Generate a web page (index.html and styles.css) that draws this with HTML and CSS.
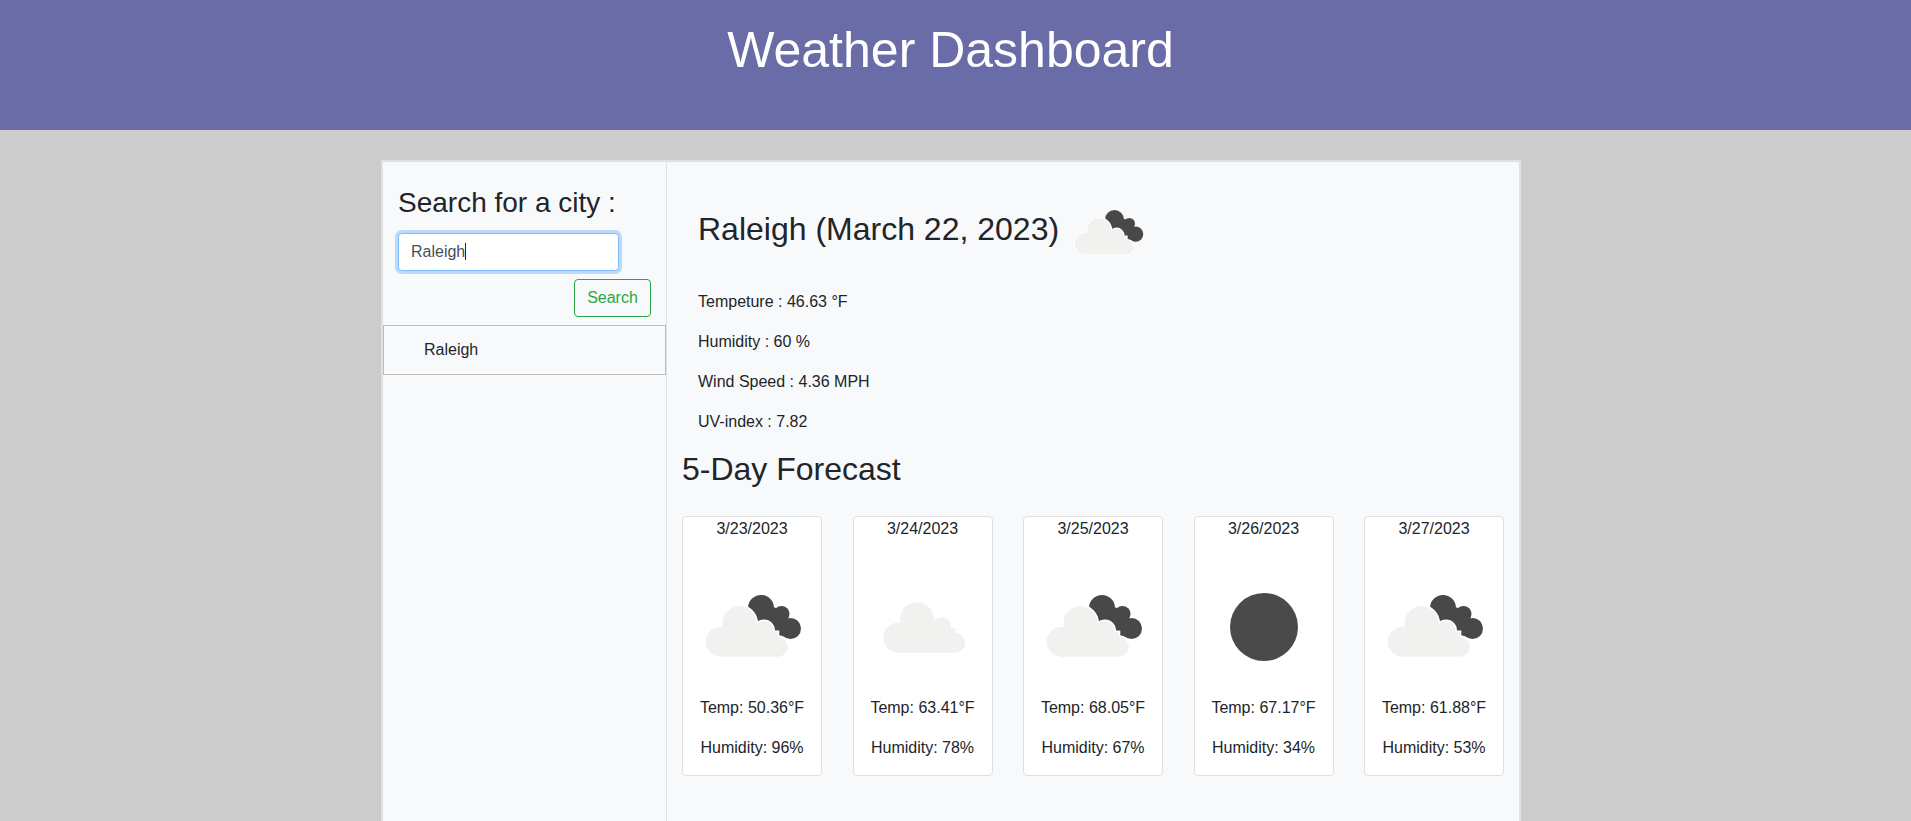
FILE: index.html
```html
<!DOCTYPE html>
<html lang="en">
<head>
	<meta charset="UTF-8">
	<meta name="viewport" content="width=device-width, initial-scale=1.0">
	<title>Weather Dashboard</title>
	<link rel="stylesheet" href="styles.css">
</head>
<body>
	<svg class="icon-defs">
		<symbol id="light-cloud" viewBox="0 0 100 100">
			<circle cx="18.8" cy="64.7" r="15"/>
			<circle cx="37.5" cy="46.3" r="17"/>
			<circle cx="62" cy="53.5" r="9.5"/>
			<circle cx="75.8" cy="69.7" r="10"/>
			<rect x="18.8" y="55" width="57" height="24.7"/>
		</symbol>
		<symbol id="dark-cloud" viewBox="0 0 100 100">
			<circle cx="59" cy="31" r="13"/>
			<circle cx="79.5" cy="37" r="8"/>
			<circle cx="88.5" cy="51.5" r="10.5"/>
			<path d="M48 28 L73 30.5 L87 42 L95 58 L84 60 L50 55 Z"/>
		</symbol>
		<symbol id="broken-clouds" viewBox="0 0 100 100">
			<use href="#dark-cloud" class="dark"/>
			<use href="#light-cloud" class="halo"/>
			<use href="#light-cloud" class="light"/>
		</symbol>
		<symbol id="scattered-clouds" viewBox="0 0 100 100">
			<use href="#light-cloud" class="light" x="6.5" y="-4"/>
		</symbol>
	</svg>

	<header class="top-bar">
		<h1>Weather Dashboard</h1>
	</header>

	<div class="wrap">
		<aside class="sidebar">
			<form class="search-form">
				<label class="search-label" for="city-input">Search for a city :</label>
				<div class="search-field">
					<input class="search-input" id="city-input" type="text" value="Raleigh">
					<span class="caret"></span>
				</div>
				<button class="search-btn" type="button">Search</button>
			</form>
			<ul class="history">
				<li>Raleigh</li>
			</ul>
		</aside>

		<main class="content">
			<section class="today">
				<div class="today-head">
					<h2>Raleigh (March 22, 2023)</h2>
					<svg class="today-icon"><use href="#broken-clouds"/></svg>
				</div>
				<p>Tempeture : 46.63 °F</p>
				<p>Humidity : 60 %</p>
				<p>Wind Speed : 4.36 MPH</p>
				<p>UV-index : 7.82</p>
			</section>

			<section class="forecast">
				<h2>5-Day Forecast</h2>
				<div class="cards">
					<div class="card">
						<div class="date">3/23/2023</div>
						<svg class="card-icon"><use href="#broken-clouds"/></svg>
						<p>Temp: 50.36°F</p>
						<p>Humidity: 96%</p>
					</div>
					<div class="card">
						<div class="date">3/24/2023</div>
						<svg class="card-icon"><use href="#scattered-clouds"/></svg>
						<p>Temp: 63.41°F</p>
						<p>Humidity: 78%</p>
					</div>
					<div class="card">
						<div class="date">3/25/2023</div>
						<svg class="card-icon"><use href="#broken-clouds"/></svg>
						<p>Temp: 68.05°F</p>
						<p>Humidity: 67%</p>
					</div>
					<div class="card">
						<div class="date">3/26/2023</div>
						<svg class="card-icon" viewBox="0 0 100 100"><circle class="sun" cx="50" cy="50" r="34"/></svg>
						<p>Temp: 67.17°F</p>
						<p>Humidity: 34%</p>
					</div>
					<div class="card">
						<div class="date">3/27/2023</div>
						<svg class="card-icon"><use href="#broken-clouds"/></svg>
						<p>Temp: 61.88°F</p>
						<p>Humidity: 53%</p>
					</div>
				</div>
			</section>
		</main>
	</div>
</body>
</html>
```

FILE: styles.css
```css
* {
	margin: 0;
	padding: 0;
	box-sizing: border-box;
}
html, body {
	height: 100%;
}
body {
	overflow: hidden;
	font-family: "Liberation Sans", Arial, sans-serif;
	font-size: 16px;
	line-height: 24px;
	color: #212529;
	background-color: #cccccc;
}
.icon-defs {
	display: none;
}
.dark {
	fill: #484848;
}
.halo {
	fill: #ffffff;
	stroke: #ffffff;
	stroke-width: 3;
}
.light {
	fill: #f1f1ef;
}
.sun {
	fill: #4a4a4a;
}

.top-bar {
	height: 130px;
	padding: 21px 10px 0 0;
	text-align: center;
	color: #fff;
	background-color: #696ca7;
}
.top-bar h1 {
	font-size: 50px;
	font-weight: 400;
	line-height: 58px;
}

.wrap {
	display: flex;
	width: 1140px;
	height: 661px;
	margin: 30px 0 0 381px;
	border: 2px solid #dee2e6;
	border-bottom: none;
	background-color: #f8f9fa;
}

.sidebar {
	width: 284px;
	flex-shrink: 0;
	border-right: 1px solid #dee2e6;
}
.search-form {
	display: flex;
	flex-direction: column;
	padding: 24px 15px 8px 15px;
}
.search-label {
	font-size: 28px;
	line-height: 34px;
	margin-bottom: 13px;
}
.search-field {
	position: relative;
	width: 221px;
}
.search-input {
	display: block;
	width: 100%;
	height: 38px;
	padding: 0 12px;
	font-family: inherit;
	font-size: 16px;
	color: #495057;
	background-color: #fff;
	border: 1px solid #80bdff;
	border-radius: 4px;
	outline: none;
	box-shadow: 0 0 0 3px rgba(0, 123, 255, .25);
}
.caret {
	position: absolute;
	left: 67px;
	top: 10px;
	width: 1px;
	height: 17px;
	background-color: #212529;
}
.search-btn {
	align-self: flex-end;
	width: 77px;
	height: 38px;
	margin-top: 8px;
	font-family: inherit;
	font-size: 16px;
	color: #28a745;
	background: none;
	border: 1px solid #28a745;
	border-radius: 4px;
}
.history {
	list-style: none;
}
.history li {
	height: 50px;
	padding: 12px 0 0 40px;
	border: 1px solid #bdbdbd;
}

.content {
	flex: 1;
	min-width: 0;
}
.content h2 {
	font-size: 32px;
	font-weight: 400;
	line-height: 38px;
}
.content p {
	margin-bottom: 16px;
}
.today {
	padding: 35px 0 0 31px;
}
.today-head {
	display: flex;
	margin-bottom: 21px;
}
.today-head h2 {
	margin: 13px 13px 0 0;
}
.today-icon {
	width: 72px;
	height: 72px;
}
.forecast {
	padding: 0 15px;
}
.forecast h2 {
	margin-bottom: 28px;
}
.cards {
	display: flex;
	justify-content: space-between;
}
.card {
	width: 140px;
	height: 260px;
	text-align: center;
	background-color: #fff;
	border: 1px solid #dddfe1;
	border-radius: 4px;
}
.card-icon {
	display: block;
	width: 100px;
	height: 100px;
	margin: 36px auto 19px;
}
```
